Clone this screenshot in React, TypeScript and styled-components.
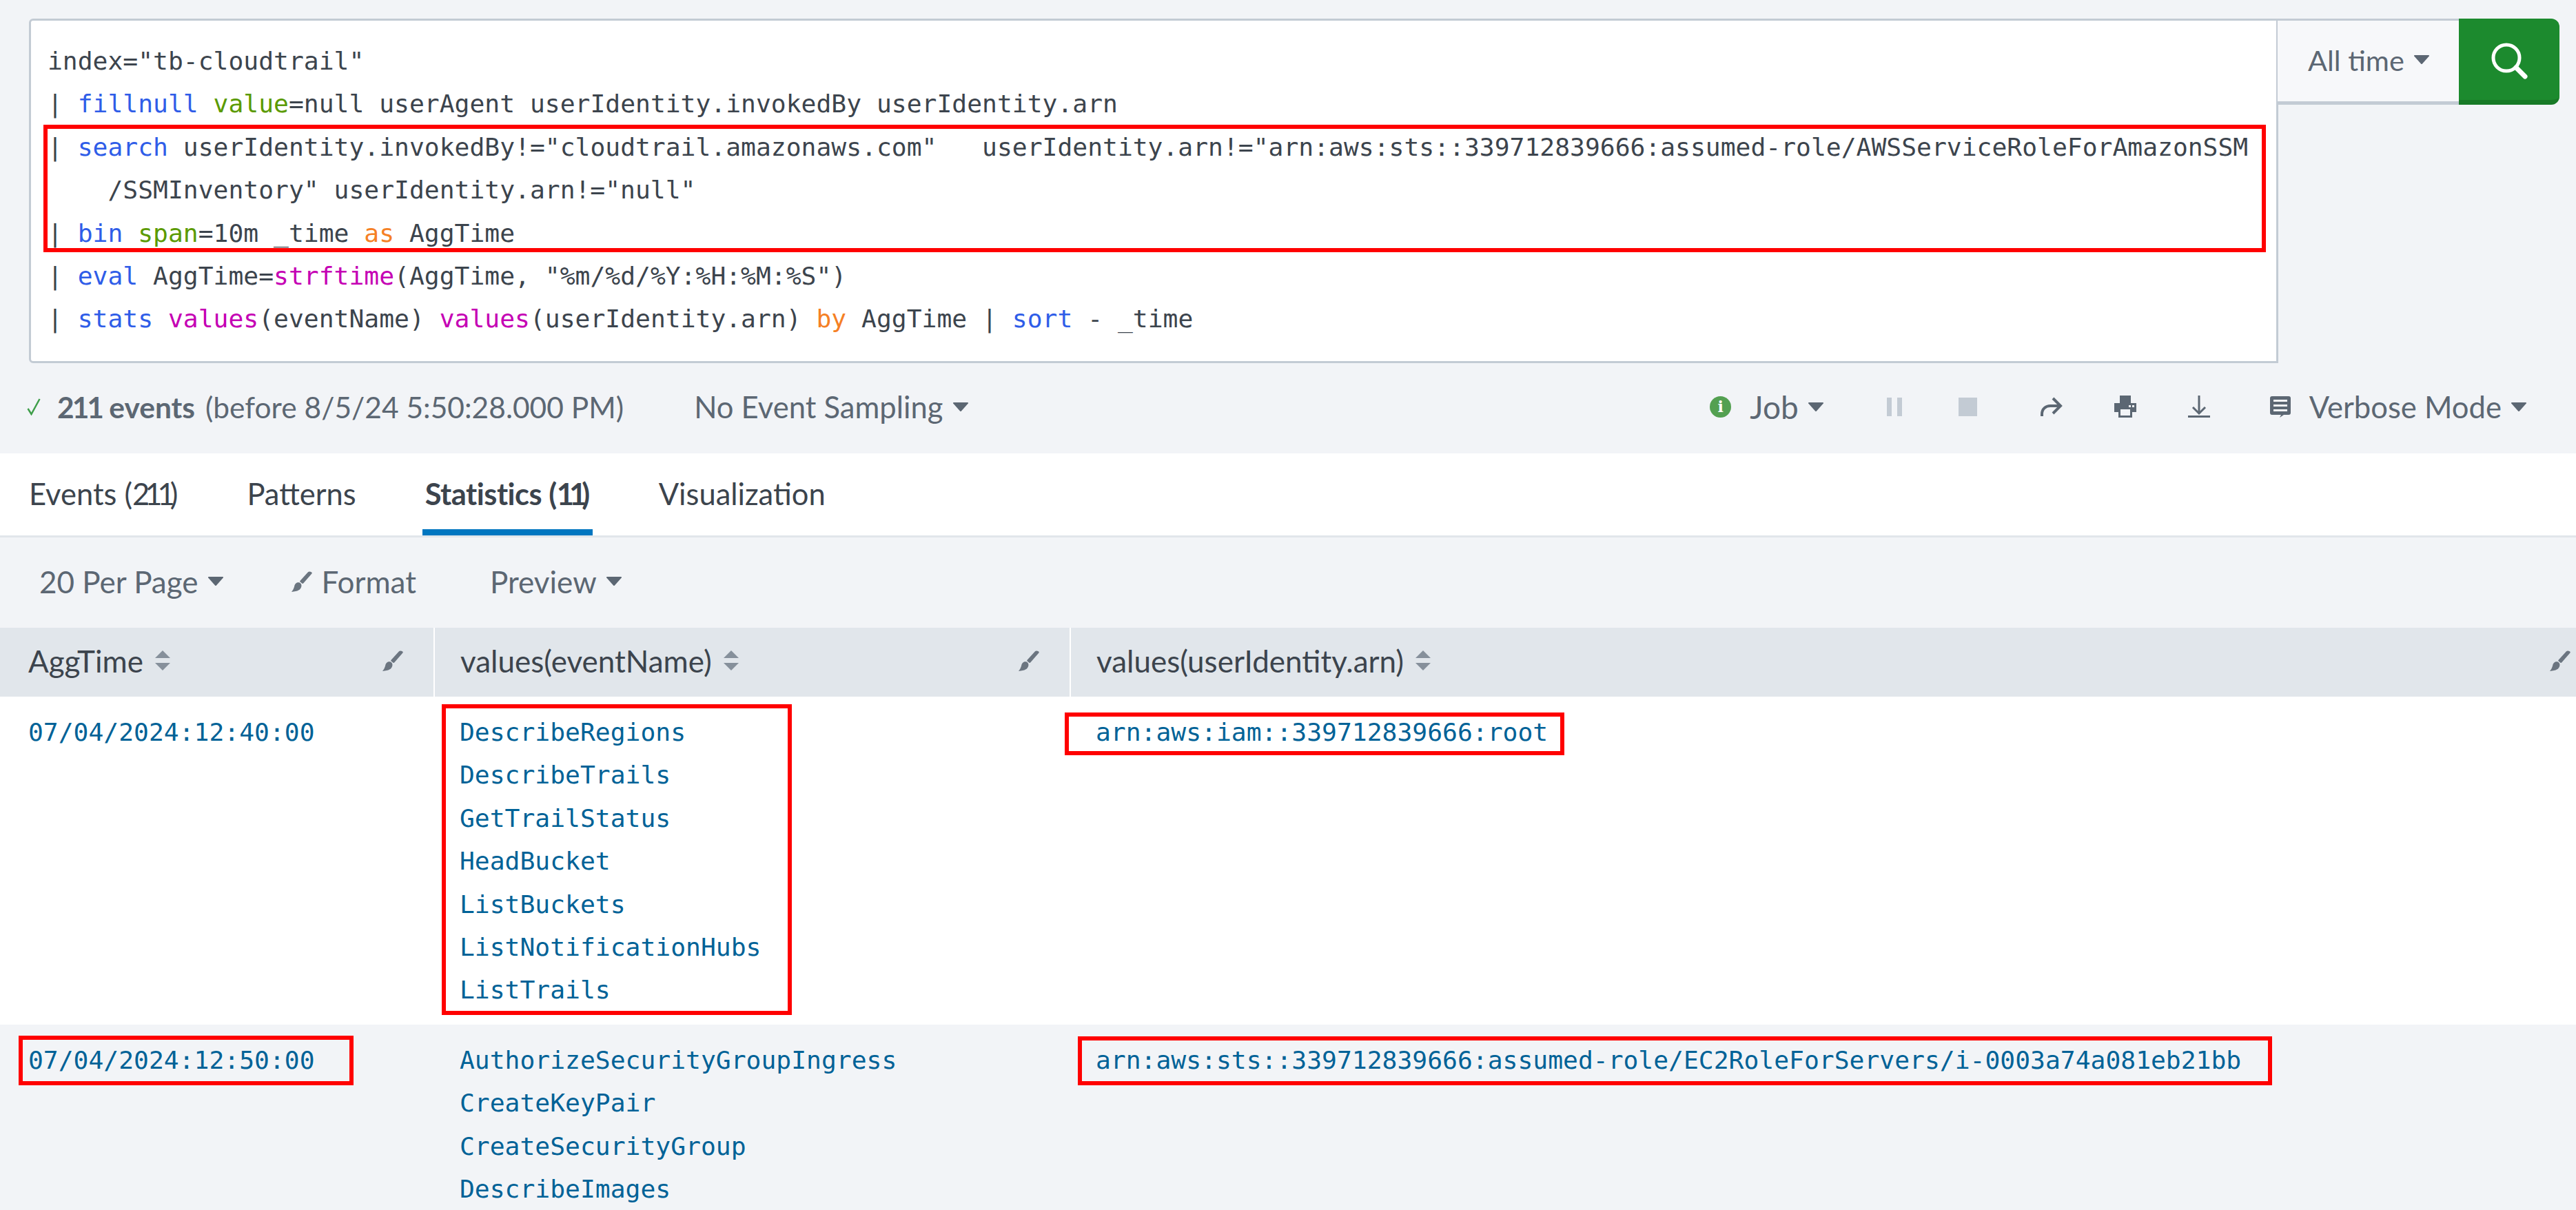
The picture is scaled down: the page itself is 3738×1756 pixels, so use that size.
import styled, { createGlobalStyle } from 'styled-components';

const GlobalStyle = createGlobalStyle`
  html, body {
    margin: 0;
    padding: 0;
    background: #f2f4f7;
  }
`;

const uiFont = `Lato, "Open Sans", sans-serif`;
const monoFont = `"DejaVu Sans Mono", monospace`;

const eventsRowOne = [
  'DescribeRegions',
  'DescribeTrails',
  'GetTrailStatus',
  'HeadBucket',
  'ListBuckets',
  'ListNotificationHubs',
  'ListTrails',
];

const eventsRowTwo = [
  'AuthorizeSecurityGroupIngress',
  'CreateKeyPair',
  'CreateSecurityGroup',
  'DescribeImages',
];

const Caret = () => (
  <CaretSvg viewBox="0 0 22 13">
    <path d="M1 0h20a1 1 0 0 1 .8 1.5L12 12.6a1.4 1.4 0 0 1-2 0L.2 1.5A1 1 0 0 1 1 0z" />
  </CaretSvg>
);

const Brush = () => (
  <BrushSvg viewBox="0 0 30 30">
    <path d="M24 1.2c1.6-1.5 3.6-.6 5.2.3.6.6.7 1.4.2 2.1L17.2 17.6c-.5.6-1.2.6-1.8.2l-2.7-2.2c-.6-.5-.6-1.2-.1-1.8z" />
    <path d="M7.600 16.800c2-.9 4.200-.5 5.500.7 1.500 1.400 1.700 3.500 1 5.600-1.100 3.600-4.500 6.400-14.100 6.900 2.200-2.600 3.300-5 4-7.500.5-2.600 1.400-4.600 3.600-5.700z" />
  </BrushSvg>
);

const SortIcon = () => (
  <SortSvg viewBox="0 0 22 30">
    <path d="M11 0l11 11H0z" />
    <path d="M0 18h22L11 29z" />
  </SortSvg>
);

export default function App() {
  return (
    <Page>
      <GlobalStyle />
      <SearchBar>
        <QueryBox>
          <Line>index="tb-cloudtrail"</Line>
          <Line>
            | <Cmd>fillnull</Cmd> <Arg>value</Arg>=null userAgent userIdentity.invokedBy userIdentity.arn
          </Line>
          <Line>
            | <Cmd>search</Cmd> userIdentity.invokedBy!="cloudtrail.amazonaws.com"   userIdentity.arn!="arn:aws:sts::339712839666:assumed-role/AWSServiceRoleForAmazonSSM
          </Line>
          <Line>    /SSMInventory" userIdentity.arn!="null"</Line>
          <Line>
            | <Cmd>bin</Cmd> <Arg>span</Arg>=10m _time <Kw>as</Kw> AggTime
          </Line>
          <Line>
            | <Cmd>eval</Cmd> AggTime=<Fn>strftime</Fn>(AggTime, "%m/%d/%Y:%H:%M:%S")
          </Line>
          <Line>
            | <Cmd>stats</Cmd> <Fn>values</Fn>(eventName) <Fn>values</Fn>(userIdentity.arn) <Kw>by</Kw> AggTime | <Cmd>sort</Cmd> - _time
          </Line>
        </QueryBox>
        <TimePicker>
          All time
          <Caret />
        </TimePicker>
        <SearchButton>
          <svg width="60" height="60" viewBox="0 0 60 60" fill="none" stroke="#fff">
            <circle cx="26" cy="25" r="19" strokeWidth="5" />
            <path d="M40 39l13 13" strokeWidth="7" strokeLinecap="round" />
          </svg>
        </SearchButton>
      </SearchBar>

      <StatusRow>
        <StatusLeft>
          <svg width="20" height="26" viewBox="0 0 20 26" fill="none" stroke="#3f9e4a" strokeWidth="2.5">
            <path d="M1.500 16l5 8L18.500 2" />
          </svg>
          <EventCount>
            <strong>
              <EventDigits>211</EventDigits> events
            </strong>{' '}
            (before 8/5/24 5:50:28.000 PM)
          </EventCount>
          <SamplingMenu>
            No Event Sampling
            <Caret />
          </SamplingMenu>
        </StatusLeft>
        <StatusRight>
          <JobMenu>
            <InfoDot>i</InfoDot>
            <JobLabel>Job</JobLabel>
            <Caret />
          </JobMenu>
          <PauseIcon>
            <span />
            <span />
          </PauseIcon>
          <StopIcon />
          <svg width="32" height="28" viewBox="0 0 32 28" fill="none" stroke="#5c6773" strokeWidth="4">
            <path d="M2 28v-3C2 17 8 13 14 13h14" />
            <path d="M18 2l11 11-11 11" />
          </svg>
          <svg width="32" height="32" viewBox="0 0 32 32" fill="#5c6773" fillRule="evenodd">
            <path d="M8 0h16v11h8v13h-6v8H6v-8H0V11h8zM9 20v9h14v-9zM21 14v3h3v-3zM26 14v3h3v-3z" />
          </svg>
          <svg width="32" height="32" viewBox="0 0 32 32" fill="none" stroke="#5c6773" strokeWidth="3">
            <path d="M16 0v26" />
            <path d="M7 17l9 9 9-9" />
            <path d="M0 30.500h32" />
          </svg>
          <VerboseMenu>
            <svg width="30" height="31" viewBox="0 0 30 31" fill="#5c6773" fillRule="evenodd">
              <path d="M3 0h24a3 3 0 0 1 3 3v21a3 3 0 0 1-3 3H20l-6 4 2-4H3a3 3 0 0 1-3-3V3a3 3 0 0 1 3-3zM5 5v3h20V5zM5 12v3h20v-3zM5 19v3h20v-3z" />
            </svg>
            Verbose Mode
            <Caret />
          </VerboseMenu>
        </StatusRight>
      </StatusRow>

      <Tabs>
        <Tab>
          Events (<Digits>211</Digits>)
        </Tab>
        <Tab>Patterns</Tab>
        <Tab $active>
          Statistics (<Digits>11</Digits>)
        </Tab>
        <Tab>Visualization</Tab>
      </Tabs>

      <Toolbar>
        <Menu>
          20 Per Page
          <Caret />
        </Menu>
        <Menu $gap={99}>
          <Brush />
          Format
        </Menu>
        <Menu $gap={107}>
          Preview
          <Caret />
        </Menu>
      </Toolbar>

      <Table>
        <TableHead>
          <HeadCell>
            <HeadLabel>
              AggTime
              <SortIcon />
            </HeadLabel>
            <Brush />
          </HeadCell>
          <HeadCell>
            <HeadLabel>
              values(eventName)
              <SortIcon />
            </HeadLabel>
            <Brush />
          </HeadCell>
          <HeadCell>
            <HeadLabel>
              values(userIdentity.arn)
              <SortIcon />
            </HeadLabel>
            <Brush />
          </HeadCell>
        </TableHead>
        <TableRow>
          <Cell>07/04/2024:12:40:00</Cell>
          <Cell>
            {eventsRowOne.map((name) => (
              <div key={name}>{name}</div>
            ))}
          </Cell>
          <Cell>arn:aws:iam::339712839666:root</Cell>
        </TableRow>
        <TableRow $alt>
          <Cell>07/04/2024:12:50:00</Cell>
          <Cell>
            {eventsRowTwo.map((name) => (
              <div key={name}>{name}</div>
            ))}
          </Cell>
          <Cell>arn:aws:sts::339712839666:assumed-role/EC2RoleForServers/i-0003a74a081eb21bb</Cell>
        </TableRow>
      </Table>

      <Highlight $left={63} $top={181} $width={3225} $height={185} />
      <Highlight $left={641} $top={1022} $width={508} $height={451} />
      <Highlight $left={1545} $top={1034} $width={725} $height={62} />
      <Highlight $left={27} $top={1503} $width={486} $height={72} />
      <Highlight $left={1564} $top={1504} $width={1733} $height={71} />
    </Page>
  );
}

const Page = styled.div`
  position: relative;
  width: 3738px;
  height: 1756px;
  overflow: hidden;
  background: #f2f4f7;
  font-family: ${uiFont};
  font-size: 42.5px;
  color: #5c6773;
`;

const Highlight = styled.div<{ $left: number; $top: number; $width: number; $height: number }>`
  position: absolute;
  left: ${({ $left }) => $left}px;
  top: ${({ $top }) => $top}px;
  width: ${({ $width }) => $width}px;
  height: ${({ $height }) => $height}px;
  box-sizing: border-box;
  border: 6px solid #ff0000;
  pointer-events: none;
`;

const SearchBar = styled.div`
  display: flex;
  align-items: flex-start;
  padding: 27px 0 0 42px;
`;

const QueryBox = styled.div`
  box-sizing: border-box;
  width: 3264px;
  height: 500px;
  padding: 28px 0 0 24px;
  background: #fff;
  border: 3px solid #c3cbd4;
  border-radius: 6px 0 0 6px;
  font-family: ${monoFont};
  font-size: 36.35px;
  color: #3c444d;
`;

const Line = styled.div`
  height: 62.4px;
  line-height: 62.4px;
  white-space: pre;
`;

const Cmd = styled.span`
  color: #2f5de8;
`;

const Arg = styled.span`
  color: #5b9a00;
`;

const Kw = styled.span`
  color: #f58025;
`;

const Fn = styled.span`
  color: #c500b4;
`;

const Digits = styled.span`
  letter-spacing: -7px;
`;

const EventDigits = styled.span`
  letter-spacing: -3px;
`;

const TimePicker = styled.div`
  box-sizing: border-box;
  display: flex;
  align-items: center;
  gap: 14px;
  width: 263px;
  height: 125px;
  padding: 0 0 4px 44px;
  margin-left: -1px;
  background: #f7f8fa;
  border-top: 3px solid #c3cbd4;
  border-bottom: 5px solid #c3cbd4;
  font-size: 41.5px;
`;

const SearchButton = styled.div`
  box-sizing: border-box;
  display: flex;
  align-items: center;
  justify-content: center;
  width: 146px;
  height: 125px;
  padding: 6px 0 0 0;
  background: #1c8a2e;
  border-bottom: 7px solid #187a27;
  border-radius: 0 12px 12px 0;
`;

const CaretSvg = styled.svg`
  flex: none;
  width: 22px;
  height: 13px;
  fill: #5c6773;
`;

const BrushSvg = styled.svg`
  flex: none;
  width: 30px;
  height: 30px;
  fill: #6b7580;
`;

const SortSvg = styled.svg`
  flex: none;
  width: 22px;
  height: 30px;
  fill: #86909b;
`;

const StatusRow = styled.div`
  display: flex;
  align-items: center;
  justify-content: space-between;
  box-sizing: border-box;
  height: 132px;
  padding: 0 72px 4px 39px;
  margin-top: -1px;
`;

const StatusLeft = styled.div`
  display: flex;
  align-items: center;
  gap: 24px;
`;

const StatusRight = styled.div`
  display: flex;
  align-items: center;
  gap: 75px;
`;

const EventCount = styled.span`
  white-space: pre;

  strong {
    margin-right: 4px;
    font-weight: 700;
  }
`;

const Menu = styled.div<{ $gap?: number }>`
  display: flex;
  align-items: center;
  gap: 14px;
  margin-left: ${({ $gap }) => $gap ?? 0}px;
`;

const SamplingMenu = styled(Menu)`
  margin-left: 78px;
  font-size: 43.6px;
`;

const JobMenu = styled.div`
  display: flex;
  align-items: center;
  gap: 14px;
  margin-right: 17px;
`;

const JobLabel = styled.span`
  font-size: 46px;
`;

const InfoDot = styled.span`
  display: flex;
  align-items: center;
  justify-content: center;
  width: 31px;
  height: 31px;
  margin-right: 13px;
  border-radius: 50%;
  background: #53a051;
  color: #fff;
  font-family: "DejaVu Serif", serif;
  font-size: 22px;
  font-weight: 700;
`;

const PauseIcon = styled.div`
  display: flex;
  gap: 8px;

  span {
    width: 7px;
    height: 27px;
    background: #c3cbd4;
  }
`;

const StopIcon = styled.div`
  width: 27px;
  height: 27px;
  margin: 0 17px 0 7px;
  background: #c3cbd4;
`;

const VerboseMenu = styled.div`
  display: flex;
  align-items: center;
  gap: 14px;
  margin-left: 12px;
  font-size: 43.6px;

  svg:first-child {
    margin-right: 13px;
  }
`;

const Tabs = styled.div`
  display: flex;
  gap: 92px;
  height: 119px;
  padding: 0 0 0 38px;
  background: #fff;
  border-bottom: 3px solid #e1e6eb;
  font-size: 43.5px;
`;

const Tab = styled.div<{ $active?: boolean }>`
  display: flex;
  align-items: center;
  box-sizing: border-box;
  height: 119px;
  padding: 0 4px 4px;
  white-space: pre;
  color: #3c444d;
  font-weight: ${({ $active }) => ($active ? 700 : 400)};
  letter-spacing: ${({ $active }) => ($active ? '-0.5px' : '0')};
  box-shadow: ${({ $active }) => ($active ? 'inset 0 -9px 0 #0076c0' : 'none')};
`;

const Toolbar = styled.div`
  display: flex;
  align-items: center;
  box-sizing: border-box;
  height: 131px;
  padding: 0 0 4px 57px;
  font-size: 44px;
`;

const Table = styled.div`
  background: #fff;
`;

const TableHead = styled.div`
  display: grid;
  grid-template-columns: 629px 921px 1fr;
  column-gap: 2px;
  height: 100px;
  background: #fff;
`;

const HeadCell = styled.div`
  display: flex;
  align-items: center;
  justify-content: space-between;
  padding: 0 0 4px 37px;
  background: #e1e6eb;
  color: #3c444d;
  font-size: 44px;

  &:first-child {
    padding-left: 41px;
  }

  svg:last-child {
    margin-right: 44px;
  }

  &:last-child svg:last-child {
    margin-right: 8px;
  }
`;

const HeadLabel = styled.div`
  display: flex;
  align-items: center;
  gap: 17px;

  svg:last-child {
    margin-right: 0;
  }
`;

const TableRow = styled.div<{ $alt?: boolean }>`
  display: grid;
  grid-template-columns: 629px 921px 1fr;
  column-gap: 2px;
  padding: 21px 0 18px;
  background: ${({ $alt }) => ($alt ? '#f2f4f7' : '#fff')};
  font-family: ${monoFont};
  font-size: 36.35px;
  line-height: 62.4px;
  color: #006297;
`;

const Cell = styled.div`
  padding-left: 36px;
  white-space: pre;

  &:first-child {
    padding-left: 41px;
  }
`;
